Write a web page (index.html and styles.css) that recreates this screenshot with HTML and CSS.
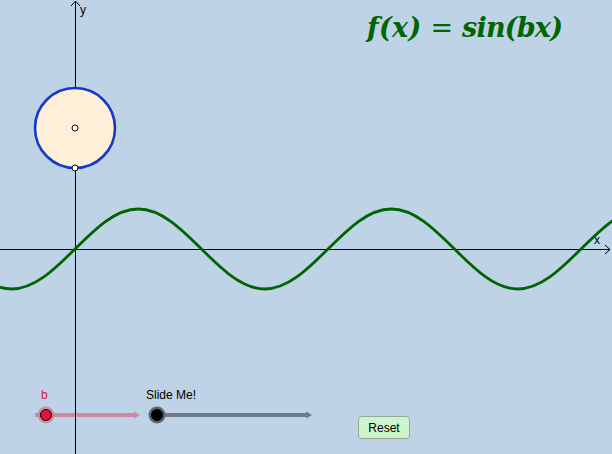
FILE: index.html
```html
<!DOCTYPE html>
<html>
<head>
<meta charset="utf-8">
<link rel="stylesheet" href="styles.css">
</head>
<body>
<div class="applet">
  <svg class="graph" width="612" height="454" viewBox="0 0 612 454">
    <!-- sliders -->
    <g class="slider-b">
      <line x1="35" y1="415" x2="137" y2="415" stroke="#c98aa3" stroke-width="4"/>
      <path d="M134 411.5 L140 415 L134 418.5 Z" fill="#c98aa3"/>
      <circle cx="46" cy="415" r="8.5" fill="#d37f97" opacity="0.85"/>
      <circle cx="46" cy="415" r="5.5" fill="#dc143c" stroke="#000" stroke-width="1"/>
    </g>
    <g class="slider-s">
      <line x1="157" y1="415" x2="308" y2="415" stroke="#707b87" stroke-width="4"/>
      <path d="M306 411.5 L312 415 L306 418.5 Z" fill="#707b87"/>
      <circle cx="157" cy="415" r="8.5" fill="#5c6670"/>
      <circle cx="157" cy="415" r="5.5" fill="#000" stroke="#000" stroke-width="1"/>
    </g>
    <!-- axes -->
    <line x1="0" y1="249.5" x2="610" y2="249.5" stroke="#000" stroke-width="1"/>
    <path d="M605 245 L610 249.5 L605 254" fill="none" stroke="#000" stroke-width="1"/>
    <line x1="75.5" y1="1" x2="75.5" y2="454" stroke="#000" stroke-width="1"/>
    <path d="M71 6 L75.5 1 L80 6" fill="none" stroke="#000" stroke-width="1"/>
    <!-- circle -->
    <circle cx="75" cy="128" r="40" fill="#ffefd9" stroke="#1539c9" stroke-width="2.6"/>
    <circle cx="75" cy="128" r="3" fill="#fff" stroke="#000" stroke-width="1"/>
    <circle cx="75" cy="168" r="3" fill="#fff" stroke="#000" stroke-width="1"/>
    <!-- sine -->
    <path transform="translate(75 249) scale(1 -1)" fill="none" stroke="#006400" stroke-width="2.8"
      d="M-126.5 0
         c20.65 -20.51 40.36 -40 63.25 -40
         c22.89 0 42.6 19.49 63.25 40
         c20.65 20.51 40.36 40 63.25 40
         c22.89 0 42.6 -19.49 63.25 -40
         c20.65 -20.51 40.36 -40 63.25 -40
         c22.89 0 42.6 19.49 63.25 40
         c20.65 20.51 40.36 40 63.25 40
         c22.89 0 42.6 -19.49 63.25 -40
         c20.65 -20.51 40.36 -40 63.25 -40
         c22.89 0 42.6 19.49 63.25 40
         c20.65 20.51 40.36 40 63.25 40
         c22.89 0 42.6 -19.49 63.25 -40"/>
  </svg>
  <div class="title"><span class="m-lhs">f(x)</span><span class="m-eq">=</span><span class="m-rhs">sin(bx)</span></div>
  <div class="axis-label label-y">y</div>
  <div class="axis-label label-x">x</div>
  <div class="slider-label label-b">b</div>
  <div class="slider-label label-s">Slide Me!</div>
  <button class="reset">Reset</button>
</div>
</body>
</html>
```
FILE: styles.css
```css
html, body {
  margin: 0;
  padding: 0;
  background: #bed3e6;
}
.applet {
  position: relative;
  width: 612px;
  height: 454px;
  overflow: hidden;
  background: #bed3e6;
  font-family: "Liberation Sans", Arial, sans-serif;
}
.graph {
  display: block;
}
.title {
  position: absolute;
  left: 367px;
  top: 12px;
  display: flex;
  align-items: baseline;
  gap: 9px;
  font-family: "DejaVu Serif", serif;
  font-size: 27px;
  color: #006400;
  white-space: nowrap;
}
.m-lhs,
.m-rhs {
  font-style: italic;
  font-weight: bold;
}
.m-lhs {
  letter-spacing: 0.3px;
}
.m-rhs {
  letter-spacing: -0.8px;
}
.m-eq {
  font-weight: normal;
  font-style: normal;
}
.axis-label {
  position: absolute;
  font-size: 12px;
  color: #000;
}
.label-y {
  left: 80px;
  top: 3px;
}
.label-x {
  left: 594px;
  top: 233px;
}
.slider-label {
  position: absolute;
  font-size: 12px;
  top: 388px;
  white-space: nowrap;
}
.label-b {
  left: 41px;
  color: #dc143c;
}
.label-s {
  left: 146px;
  color: #000;
}
.reset {
  position: absolute;
  left: 358px;
  top: 416px;
  width: 52px;
  height: 23px;
  padding: 0;
  background: #ccf5cc;
  border: 1px solid #9aa59a;
  border-radius: 4px;
  font-family: "Liberation Sans", Arial, sans-serif;
  font-size: 12px;
  color: #000;
}
```
